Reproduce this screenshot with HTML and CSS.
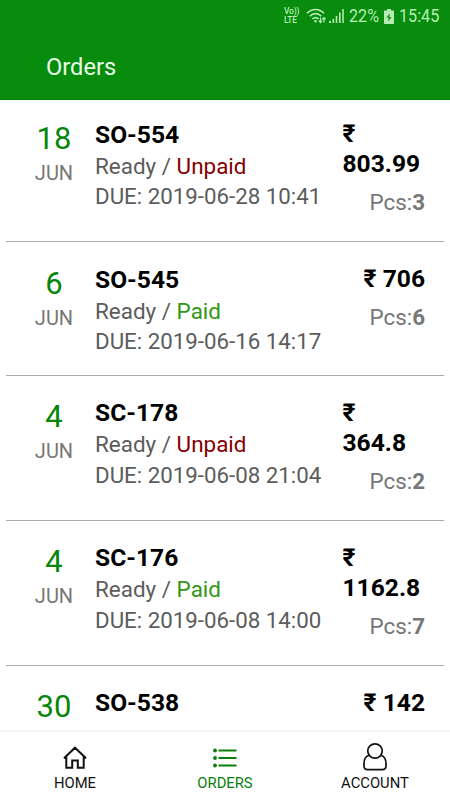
FILE: index.html
```html
<!DOCTYPE html>
<html lang="en">
<head>
<meta charset="utf-8">
<title>Orders</title>
<link rel="stylesheet" href="styles.css">
</head>
<body>
<div class="app">
  <header class="header">
    <div class="status-bar">
      <div class="volte"><span>Vo))</span><span>LTE</span></div>
      <svg class="wifi" width="21" height="16" viewBox="0 0 21 16" fill="none" stroke="currentColor" stroke-width="1.6">
        <path d="M1 5.2C6 .2 13 .2 18 5.2M3.7 8.2c3.600-3.500 8.200-3.500 11.600 0M6.500 11c1.800-1.900 4.300-1.900 6 0"/>
        <circle cx="9.500" cy="13.300" r="1.200" fill="currentColor" stroke="none"/>
        <path stroke-width="1.200" d="M14.500 9.500v5M12.800 12.700l1.700 1.900 1.700-1.900M18 14.500v-5M16.300 11.300 18 9.500l1.700 1.800"/>
      </svg>
      <svg class="signal" width="16" height="16" viewBox="0 0 16 16" fill="currentColor">
        <path d="M0 13h2v2H0zM3.500 11h1.600v4H3.500zM6.700 8h1.600v7H6.700zM10 4.500h1.600V15H10zM13.300 1h1.500v14h-1.500z"/>
      </svg>
      <span class="battery-level">22%</span>
      <svg class="battery" width="10" height="15" viewBox="0 0 10 15">
        <path fill="currentColor" d="M3 0h4v1.500h2c.6 0 1 .4 1 1V14c0 .6-.4 1-1 1H1c-.6 0-1-.4-1-1V2.500c0-.6.4-1 1-1h2z"/>
        <path fill="#078c0d" d="M5.800 4.200 2.500 8.700h2.200L4.200 12.500 7.500 7.900H5.300z"/>
      </svg>
      <span class="clock">15:45</span>
    </div>
    <h1 class="page-title">Orders</h1>
  </header>

  <main class="orders">
    <article class="order">
      <div class="date"><span class="day">18</span><span class="month">JUN</span></div>
      <div class="details"><h2>SO-554</h2><p class="state">Ready / <span class="unpaid">Unpaid</span></p><p>DUE: 2019-06-28 10:41</p></div>
      <div class="summary"><div class="price">₹ 803.99</div><div class="pieces">Pcs:<b>3</b></div></div>
    </article>
    <article class="order">
      <div class="date"><span class="day">6</span><span class="month">JUN</span></div>
      <div class="details"><h2>SO-545</h2><p class="state">Ready / <span class="paid">Paid</span></p><p>DUE: 2019-06-16 14:17</p></div>
      <div class="summary"><div class="price">₹ 706</div><div class="pieces">Pcs:<b>6</b></div></div>
    </article>
    <article class="order">
      <div class="date"><span class="day">4</span><span class="month">JUN</span></div>
      <div class="details"><h2>SC-178</h2><p class="state">Ready / <span class="unpaid">Unpaid</span></p><p>DUE: 2019-06-08 21:04</p></div>
      <div class="summary"><div class="price">₹ 364.8</div><div class="pieces">Pcs:<b>2</b></div></div>
    </article>
    <article class="order">
      <div class="date"><span class="day">4</span><span class="month">JUN</span></div>
      <div class="details"><h2>SC-176</h2><p class="state">Ready / <span class="paid">Paid</span></p><p>DUE: 2019-06-08 14:00</p></div>
      <div class="summary"><div class="price">₹ 1162.8</div><div class="pieces">Pcs:<b>7</b></div></div>
    </article>
    <article class="order">
      <div class="date"><span class="day">30</span></div>
      <div class="details"><h2>SO-538</h2><p class="state">Delivered / <span class="paid">Paid</span></p></div>
      <div class="summary"><div class="price">₹ 142</div></div>
    </article>
  </main>

  <nav class="tabs">
    <a class="tab">
      <svg width="28" height="30" viewBox="0 0 28 30" fill="none" stroke="currentColor" stroke-width="2">
        <path d="M3 16.300 14 5.700l11 10.600M5.300 14.500v11.300h5.900v-7.300h5.600v7.300h5.900V14.500"/>
      </svg>
      <span>HOME</span>
    </a>
    <a class="tab active">
      <svg width="28" height="30" viewBox="0 0 28 30" fill="currentColor">
        <circle cx="4" cy="8.500" r="1.900"/><circle cx="4" cy="16" r="1.900"/><circle cx="4" cy="23.500" r="1.900"/>
        <path d="M7.500 7.500H25.500v2H7.500zM7.500 15H25.500v2H7.500zM7.500 22.500H25.500v2H7.500z"/>
      </svg>
      <span>ORDERS</span>
    </a>
    <a class="tab">
      <svg width="28" height="30" viewBox="0 0 28 30" fill="none" stroke="currentColor" stroke-width="1.700">
        <circle cx="14" cy="9" r="7.200"/>
        <path d="M8 13.300C4.500 14.500 3 17.900 3 21.500V24c0 2.300 1.300 3.600 3.600 3.600h14.800c2.300 0 3.600-1.300 3.600-3.600v-2.500c0-3.600-1.500-7-5-8.200"/>
      </svg>
      <span>ACCOUNT</span>
    </a>
  </nav>
</div>
</body>
</html>
```
FILE: styles.css
```css
* { box-sizing: border-box; }
body { margin: 0; background: #fff; font-family: Roboto, sans-serif; }
h1, h2, p { margin: 0; }
.app { width: 450px; height: 800px; display: flex; flex-direction: column; overflow: hidden; }

.header { flex: none; height: 100px; background: #078c0d; border-bottom: 1px solid #067b0b; }
.status-bar {
  height: 32px; padding-right: 10px; display: flex; align-items: center; justify-content: flex-end;
  color: #b5edb3;
}
.volte { display: flex; flex-direction: column; width: 17px; margin-right: 5px; font-size: 8.500px; font-weight: 500; line-height: 9px; letter-spacing: -.2px; }
.wifi { margin-right: 2px; }
.signal { margin-right: 4px; }
.battery-level, .clock { font-size: 19px; line-height: 30px; white-space: nowrap; transform-origin: left center; transform: scaleX(.85); }
.battery-level { width: 30px; margin-right: 5px; }
.battery { margin-right: 5px; }
.clock { width: 41px; }
.page-title { padding: 19px 0 0 46px; font-size: 23.700px; line-height: 32px; font-weight: 400; color: #e9fbe8; }

.orders { flex: 1; min-height: 0; overflow: hidden; margin: 0 6px 4px; }
.order {
  display: flex; align-items: flex-start;
  padding: 22px 19px 17.500px 24px; border-bottom: 1px solid #aaa;
}
.order:first-child { padding-top: 19px; }
.date { width: 48px; padding-top: .8px; display: flex; flex-direction: column; align-items: center; }
.day { font-size: 31px; line-height: 38px; color: #088609; }
.month { font-size: 20px; line-height: 30px; color: #777; }
.details { flex: 1; margin-top: -.3px; padding: 0 0 .3px 17px; font-size: 22.300px; color: #5c5c5c; white-space: nowrap; }
.details h2 { font-size: 24.600px; line-height: 32px; font-weight: 700; color: #000; }
.details p { line-height: 30.500px; }
.details .state { font-size: 22.450px; }
.unpaid { color: #850000; }
.paid { color: #309815; }
.summary { width: 82.500px; flex: none; display: flex; flex-direction: column; align-items: flex-end; }
.price { font-size: 24.600px; line-height: 30px; font-weight: 700; color: #000; }
.pieces { margin-top: 8px; padding-bottom: 6.500px; font-size: 22.400px; line-height: 30px; color: #777; }

.tabs { flex: none; height: 70px; display: grid; grid-template-columns: repeat(3, 1fr); border-top: 2px solid #f5f5f5; background: #fff; }
.tab { display: flex; flex-direction: column; align-items: center; padding-top: 10px; color: #111; font-size: 14.800px; line-height: 20px; }
.tab svg { margin-bottom: 1.400px; }
.tab.active { color: #087f0b; }
```
